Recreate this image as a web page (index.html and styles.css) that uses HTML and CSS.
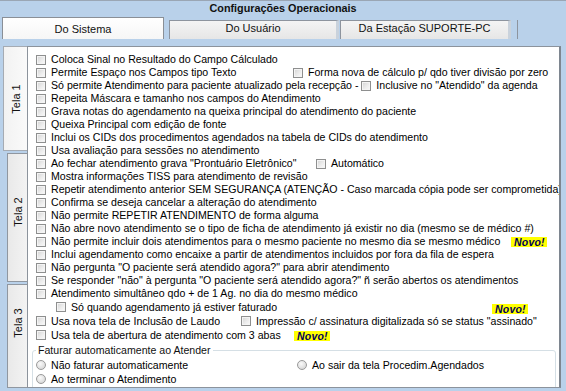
FILE: index.html
```html
<!DOCTYPE html>
<html lang="pt">
<head>
<meta charset="utf-8">
<link rel="stylesheet" href="styles.css">
</head>
<body>
<div class="window">
  <div class="title">Configurações Operacionais</div>
  <div class="tabs">
    <div class="tab sel">Do Sistema</div>
    <div class="tab t2">Do Usuário</div>
    <div class="tab t3">Da Estação SUPORTE-PC</div>
    <div class="tabend"></div>
  </div>
  <div class="body">
    <div class="vtabs">
      <div class="vtab vsel v1"><span>Tela 1</span></div>
      <div class="vtab v2"><span>Tela 2</span></div>
      <div class="vtab v3"><span>Tela 3</span></div>
    </div>
    <div class="panel">
      <div class="row"><i class="cb"></i>Coloca Sinal no Resultado do Campo Cálculado</div>
      <div class="row"><span class="col w257"><i class="cb"></i>Permite Espaço nos Campos tipo Texto</span><i class="cb"></i>Forma nova de cálculo p/ qdo tiver divisão por zero</div>
      <div class="row"><i class="cb"></i>Só permite Atendimento para paciente atualizado pela recepção -&nbsp;<i class="cb"></i>Inclusive no "Atendido" da agenda</div>
      <div class="row"><i class="cb"></i>Repeita Máscara e tamanho nos campos do Atendimento</div>
      <div class="row"><i class="cb"></i>Grava notas do agendamento na queixa principal do atendimento do paciente</div>
      <div class="row"><i class="cb"></i>Queixa Principal com edição de fonte</div>
      <div class="row"><i class="cb"></i>Inclui os CIDs dos procedimentos agendados na tabela de CIDs do atendimento</div>
      <div class="row"><i class="cb"></i>Usa avaliação para sessões no atendimento</div>
      <div class="row"><span class="col w280"><i class="cb"></i>Ao fechar atendimento grava "Prontuário Eletrônico"</span><i class="cb"></i>Automático</div>
      <div class="row"><i class="cb"></i>Mostra informações TISS para atendimento de revisão</div>
      <div class="row"><i class="cb"></i>Repetir atendimento anterior SEM SEGURANÇA (ATENÇÃO - Caso marcada cópia pode ser comprometida)</div>
      <div class="row"><i class="cb"></i>Confirma se deseja cancelar a alteração do atendimento</div>
      <div class="row"><i class="cb"></i>Não permite REPETIR ATENDIMENTO de forma alguma</div>
      <div class="row"><i class="cb"></i>Não abre novo atendimento se o tipo de ficha de atendimento já existir no dia (mesmo se de médico #)</div>
      <div class="row"><i class="cb"></i>Não permite incluir dois atendimentos para o mesmo paciente no mesmo dia se mesmo médico</div>
      <div class="row"><i class="cb"></i>Inclui agendamento como encaixe a partir de atendimentos incluidos por fora da fila de espera</div>
      <div class="row"><i class="cb"></i>Não pergunta "O paciente será atendido agora?" para abrir atendimento</div>
      <div class="row"><i class="cb"></i>Se responder "não" à pergunta "O paciente será atendido agora?" ñ serão abertos os atendimentos</div>
      <div class="row"><i class="cb"></i>Atendimento simultâneo qdo + de 1 Ag. no dia do mesmo médico</div>
      <div class="row tall indent"><i class="cb"></i>Só quando agendamento já estiver faturado</div>
      <div class="row tall"><span class="col w205"><i class="cb"></i>Usa nova tela de Inclusão de Laudo</span><i class="cb"></i>Impressão c/ assinatura digitalizada só se status "assinado"</div>
      <div class="row tall"><i class="cb"></i>Usa tela de abertura de atendimento com 3 abas</div>
      <fieldset class="group">
        <legend>Faturar automaticamente ao Atender</legend>
        <div class="radios">
          <div class="rrow"><span class="col w261"><i class="rb"></i>Não faturar automaticamente</span><i class="rb"></i>Ao sair da tela Procedim.Agendados</div>
          <div class="rrow"><i class="rb"></i>Ao terminar o Atendimento</div>
        </div>
      </fieldset>
      <span class="novo n1">Novo!</span>
      <span class="novo n2">Novo!</span>
      <span class="novo n3">Novo!</span>
    </div>
  </div>
</div>
</body>
</html>
```
FILE: styles.css
```css
* { box-sizing: border-box; }
html, body { margin: 0; padding: 0; }
body {
  width: 566px;
  height: 391px;
  overflow: hidden;
  background: #b9d1ea;
  font-family: "Liberation Sans", Arial, sans-serif;
  font-size: 10.6px;
  color: #000;
}
.window { width: 566px; height: 391px; display: flex; flex-direction: column; }
.title {
  height: 17px;
  border-top: 1px solid #9aa6b4;
  text-align: center;
  font-weight: bold;
  font-size: 10.8px;
  line-height: 15px;
  color: #111;
}
.tabs {
  height: 22px;
  display: flex;
  align-items: flex-end;
  padding-left: 2px;
  position: relative;
}
.tab {
  text-align: center;
  border: 1px solid #8d949e;
  border-bottom: none;
  background: linear-gradient(#f4f4f4, #e6e6e6);
  height: 19px;
  line-height: 15px;
  color: #111;
  font-size: 11px;
}
.tab.sel {
  width: 162px;
  height: 22px;
  line-height: 22px;
  background: linear-gradient(#ffffff, #f6f6f6);
  border-color: #8a8f96;
}
.tab.t2 { width: 170px; margin-left: 5px; border-right: 3px solid #c9d2dc; }
.tab.t3 { width: 171px; margin-left: 1px; border-right: 3px solid #c9d2dc; }
.tabend { width: 1px; height: 19px; background: #8d949e; margin-left: 6px; }
.body {
  flex: 1;
  display: flex;
  padding-top: 7px;
  padding-bottom: 3px;
  min-height: 0;
}
.vtabs {
  width: 27px;
  display: flex;
  flex-direction: column;
  padding-left: 3px;
}
.vtab {
  display: flex;
  align-items: center;
  justify-content: center;
  border: 1px solid #9097a0;
  border-right: none;
  background: linear-gradient(90deg, #e9e9e9, #f3f3f3);
  margin-left: 4px;
  font-size: 11px;
}
.vtab span {
  transform: rotate(-90deg);
  white-space: nowrap;
  color: #111;
}
.vtab.vsel { margin-left: 0; background: linear-gradient(90deg, #f2f2f2, #fafafa); border-color: #a5abb3; }
.v1 { height: 105px; }
.v2 { height: 129px; margin-top: 2px; padding-bottom: 12px; }
.v3 { flex: 1; margin-top: 2px; padding-bottom: 26px; }
.panel {
  width: 534px;
  background: #fff;
  border: 1px solid #8c939c;
  border-right: 2px solid #7e8690;
  position: relative;
  padding: 6px 0 0 8px;
  overflow: hidden;
}
.row {
  height: 13px;
  display: flex;
  align-items: center;
  white-space: nowrap;
  line-height: 13px;
}
.row.tall { height: 14px; }
.row.indent { padding-left: 20px; }
.col { display: flex; align-items: center; }
.w257 { width: 257px; }
.w280 { width: 280px; }
.w205 { width: 205px; }
.w261 { width: 261px; }
.cb {
  display: inline-block;
  width: 10px;
  height: 10px;
  flex: none;
  border: 1px solid #8e8f8f;
  background: linear-gradient(135deg, #d3d3d3 0%, #ececec 55%, #fbfbfb 100%);
  box-shadow: inset 0 0 0 1px #f4f4f4;
  margin-right: 5px;
}
.group {
  margin: 2px 3px 0 -4px;
  padding: 0 0 0 3px;
  border: 1px solid #d5dfe5;
  border-radius: 3px;
  height: 60px;
}
.group legend {
  padding: 0 2px 0 2px;
  margin-left: 0;
  line-height: 13px;
  color: #111;
}
.radios { padding-top: 1px; }
.rrow {
  height: 14px;
  display: flex;
  align-items: center;
  white-space: nowrap;
}
.rb {
  display: inline-block;
  width: 10px;
  height: 10px;
  flex: none;
  border-radius: 50%;
  border: 1px solid #9a9a9a;
  background: radial-gradient(circle at 40% 35%, #fafafa 0%, #e2e2e2 55%, #cfcfcf 100%);
  margin-right: 5px;
}
.novo {
  position: absolute;
  background: #ffff00;
  font-weight: bold;
  font-style: italic;
  font-size: 10.5px;
  line-height: 10px;
  padding: 0 2px 0 3px;
  color: #00005a;
  letter-spacing: 0.2px;
}
.n1 { left: 483px; top: 190px; }
.n2 { left: 464px; top: 257px; }
.n3 { left: 266px; top: 284px; }
```
